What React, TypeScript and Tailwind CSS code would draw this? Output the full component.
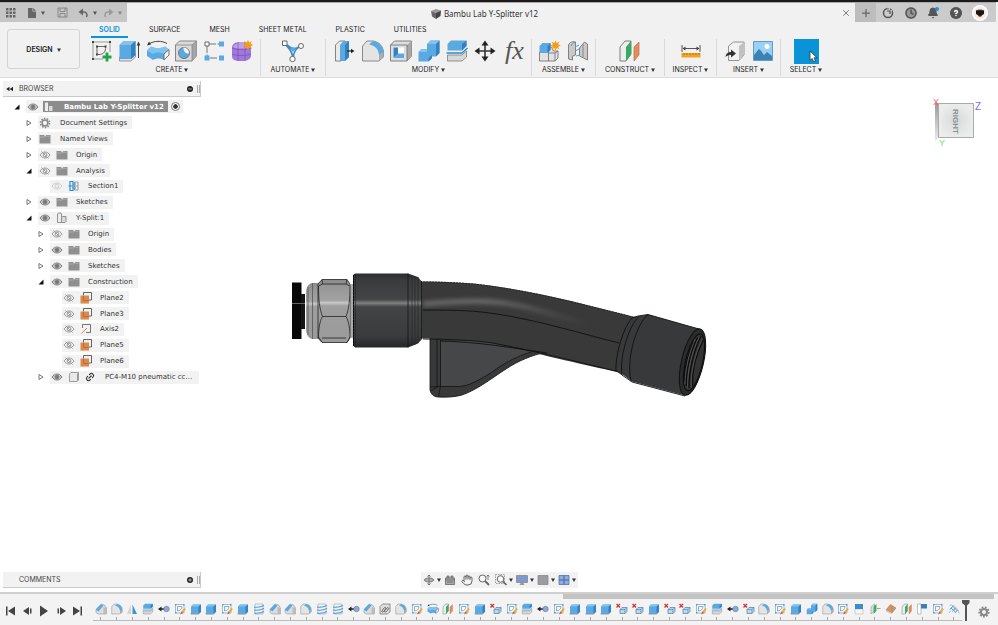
import React, { useState } from 'react';
import { Bell, Clock, Hand, HelpCircle, Link2, Plus, X } from 'lucide-react';

type IconProps = { className?: string };

const BLUE = '#5ba9e2';
const BLUE_LIGHT = '#82c2ee';
const BLUE_DARK = '#3581bd';

const Svg: React.FC<{ className?: string; children: React.ReactNode }> = ({ className = 'size-6', children }) => (
  <svg viewBox="0 0 24 24" className={`${className} shrink-0`} fill="none" aria-hidden="true">
    {children}
  </svg>
);

const SketchIcon: React.FC<IconProps> = ({ className }) => (
  <Svg className={className}>
    <path d="M3 3h17M3 3v17M20 3v10M3 20h10" stroke="#888" strokeWidth="0.8" />
    <path d="M7 7.500h8.500v2c0 4-3 6-6.500 6H7z" stroke="#555" strokeWidth="0.9" />
    <path d="M2 2h2v2H2zM19 2h2v2h-2zM2 19h2v2H2zM6 6.500h2v2H6zM14.500 6.500h2v2h-2zM6 14.500h2v2H6z" fill="#444" />
    <path d="M17 13.500v9M12.500 18h9" stroke="#23a348" strokeWidth="2.800" />
  </Svg>
);

const SketchEditIcon: React.FC<IconProps> = ({ className }) => (
  <Svg className={className}>
    <path d="M3 3h17v17H3z" fill="#f7fafc" stroke="#8d9da9" strokeWidth="1.400" />
    <path d="M7 7h9c0 5-4 9-9 9z" stroke="#5fa0d2" strokeWidth="1.600" />
    <path d="M2 2h3v3H2zM18 2h3v3h-3zM2 18h3v3H2z" fill="#5b9bcb" />
    <path d="M22 11l-7 9" stroke="#eda832" strokeWidth="4" />
    <path d="M15 17l-3 6 6-3z" fill="#cf4e40" />
  </Svg>
);

const ExtrudeIcon: React.FC<IconProps> = ({ className }) => (
  <Svg className={className}>
    <path d="M1.500 18v4h11.500l4.500-4v-3z" fill="#ddd" stroke="#888" strokeWidth="0.8" />
    <path d="M1.500 6l4-4h12v14l-4.500 4H1.500z" fill={BLUE} />
    <path d="M1.500 6l4-4h12l-4.500 4z" fill={BLUE_LIGHT} />
    <path d="M13 6l4.500-4v14L13 20z" fill={BLUE_DARK} />
    <path d="M20.500 19V5" stroke="#444" />
    <path d="M18.700 6.500l1.800-4 1.800 4z" fill="#333" />
  </Svg>
);

const BoxIcon: React.FC<IconProps> = ({ className }) => (
  <Svg className={className}>
    <path d="M2 7l4-4h16v14l-5 5H2z" fill={BLUE} />
    <path d="M2 7l4-4h16l-5 4z" fill={BLUE_LIGHT} />
    <path d="M17 7l5-4v14l-5 5z" fill={BLUE_DARK} />
    <path d="M2 20v2.500h15l5-5" stroke="#999" strokeWidth="1.500" />
  </Svg>
);

const RevolveIcon: React.FC<IconProps> = ({ className }) => (
  <Svg className={className}>
    <path d="M3 5C8 1.500 16 1.500 21 4.500" stroke="#444" />
    <path d="M1 6.500l2-4 2 3z" fill="#333" />
    <path d="M1 11.500L5 7.500c4 2 10 2 14 0l4 3v5.500l-5 5c-3-2-8-2-11 0l-6-4z" fill={BLUE} />
    <path d="M1 11.500L5 7.500c4 2 10 2 14 0l4 3-5 4.500c-3-2-8-2-11 0z" fill={BLUE_LIGHT} />
    <path d="M18 15l5-4.500v5.500l-5 5z" fill="#f3f3f3" stroke="#666" strokeWidth="0.9" />
  </Svg>
);

const HoleIcon: React.FC<IconProps> = ({ className }) => (
  <Svg className={className}>
    <path d="M1.500 6l4-4h17v15L18 22H1.500z" fill="#dadada" stroke="#7b7b7b" strokeWidth="0.9" />
    <path d="M18 6l4.500-4v15L18 22z" fill="#a5a5a5" />
    <path d="M1.500 6H18v16M18 6l4.500-4" stroke="#858585" strokeWidth="0.8" />
    <circle cx="10" cy="14" r="5.500" fill={BLUE} stroke="#667" strokeWidth="0.8" />
    <path d="M9.500 8.500a5.500 5.500 0 0 1 5.500 6c-3 .5-6-2-5.500-6z" fill="#f5f5f5" />
  </Svg>
);

const PatternIcon: React.FC<IconProps> = ({ className }) => (
  <Svg className={className}>
    <path d="M7 5h11M5 7v11M8 19h8" stroke="#777" strokeDasharray="7 1.500" />
    <path d="M3 3h4v4H3z" fill="#fff" stroke="#666" />
    <path d="M17 2.500h5v5h-5zM2.500 16.500h5v5h-5zM17 16.500h5v5h-5z" fill={BLUE} />
  </Svg>
);

const Star: React.FC<{ x: number; y: number }> = ({ x, y }) => (
  <g transform={`translate(${x} ${y})`}>
    <path d="M0-5l1.200 2.600L4-4 2.600-1.200 5.200 0 2.600 1.200 4 4 1.200 2.600 0 5.200-1.200 2.600-4 4-2.600 1.200-5.200 0-2.600-1.200-4-4-1.200-2.400z" fill="#f29d1d" />
  </g>
);

const FormIcon: React.FC<IconProps> = ({ className }) => (
  <Svg className={className}>
    <path d="M2 9c0-4 3-6 8-6 6 0 11 2 11 6v7c0 4-3 6-10 6-6 0-9-1-9-5z" fill="#a078da" />
    <path d="M3 8c2-3 6-5 9-5 4 0 7 2 8 5-4 2-13 2-17 0z" fill="#bf9fea" />
    <path d="M2 9c4 2 15 2 19 0M2 15c4 2 15 2 19 0M8 3.500V22M15 3.500V22" stroke="#7650b0" strokeWidth="0.7" />
    <Star x={18} y={6} />
  </Svg>
);

const AutomateIcon: React.FC<IconProps> = ({ className }) => (
  <Svg className={className}>
    <path d="M4 4.500c4 6 7 6 8 15M20 7c-5 2-7 5-8 12M6 6c5 5 8 4 12 2" stroke="#3f8cc8" strokeWidth="1.800" />
    <path d="M9 10l3 3 3-3-3-2z" fill={BLUE} />
    <path d="M1.500 2h4.500v4.500H1.500z" fill="#fff" stroke="#666" />
    <circle cx="20" cy="7" r="2.500" fill="#fff" stroke="#666" />
    <circle cx="11.500" cy="20" r="2.700" fill="#fff" stroke="#666" />
  </Svg>
);

const PressPullIcon: React.FC<IconProps> = ({ className }) => (
  <Svg className={className}>
    <path d="M2.500 6l4-4H12v16l-4 4H2.500z" fill="#e9e9e9" stroke="#777" strokeWidth="0.9" />
    <path d="M7 6l3.500-4H16v16l-4 4H7z" fill={BLUE} />
    <path d="M12 6l4-4v16l-4 4z" fill={BLUE_DARK} />
    <path d="M14 12h5" stroke="#222" strokeWidth="1.200" />
    <path d="M18 9.800l3.500 2.200-3.500 2.200z" fill="#222" />
  </Svg>
);

const FilletIcon: React.FC<IconProps> = ({ className }) => (
  <Svg className={className}>
    <path d="M1.500 7l4.500-5h6c6 1 10 5 10.500 11v5L18 22H1.500z" fill="#e4e4e4" stroke="#808080" strokeWidth="0.9" />
    <path d="M18 16l4.500-3v5L18 22z" fill="#adadad" />
    <path d="M8 5.500L12 2c6 1 10 5 10.500 11L18 16C17.500 10 14 6.500 8 5.500z" fill={BLUE} />
  </Svg>
);

const ChamferIcon: React.FC<IconProps> = ({ className }) => (
  <Svg className={className}>
    <path d="M2 14L13 2l6 2 4 6v12H6l-4-3z" fill="#ddd" stroke="#959595" strokeWidth="1.200" />
    <path d="M17 8l6 2v12h-6z" fill="#bcbcbc" />
    <path d="M1 13L12 2l5 3L7 17z" fill={BLUE} />
  </Svg>
);

const ShellIcon: React.FC<IconProps> = ({ className }) => (
  <Svg className={className}>
    <path d="M1.500 6l4-4h17v15L18 22H1.500z" fill="#dedede" stroke="#777" strokeWidth="0.9" />
    <path d="M18 6l4.500-4v15L18 22z" fill="#a8a8a8" />
    <path d="M1.500 6H18v16" stroke="#777" strokeWidth="0.9" />
    <path d="M4.500 8.500H15V19H4.500z" fill="#fff" />
    <path d="M4.500 8.500h4.500V15l-4.500 4z" fill={BLUE_DARK} />
    <path d="M4.500 19L9 14.500h6V19z" fill={BLUE} />
  </Svg>
);

const CombineIcon: React.FC<IconProps> = ({ className }) => (
  <Svg className={className}>
    <path d="M1.500 13l3-3H10V5l3.500-3.500h9V14l-3.500 3.500h-4V19l-3.500 3.500h-10z" fill={BLUE} />
    <path d="M10 5l3.500-3.500h9L19 5zM1.500 13l3-3H10v3z" fill={BLUE_LIGHT} />
    <path d="M19 5l3.500-3.500V14L19 17.500zM11.500 19l3.500-3v3l-3.500 3.500z" fill={BLUE_DARK} />
  </Svg>
);

const SplitIcon: React.FC<IconProps> = ({ className }) => (
  <Svg className={className}>
    <path d="M2.500 16v6H17l4.500-4v-6L17 16z" fill="#d8d8d8" stroke="#888" strokeWidth="0.9" />
    <path d="M2.500 5L6 1.500h15.500V7L17 11.500H2.500z" fill={BLUE} />
    <path d="M17 5l4.500-3.500V7L17 11.500z" fill={BLUE_DARK} />
    <path d="M1.500 14h15.500l5.500-5" stroke="#3189c9" strokeWidth="1.300" />
  </Svg>
);

const MoveIcon: React.FC<IconProps> = ({ className }) => (
  <Svg className={className}>
    <path d="M12 4v16M4 12h16" stroke="#333" strokeWidth="1.600" />
    <path d="M12 1.500l3.500 5h-7zM12 22.500l-3.500-5h7zM1.500 12l5-3.500v7zM22.500 12l-5 3.500v-7z" fill="#222" />
  </Svg>
);

const FxIcon: React.FC<IconProps> = () => (
  <span className="flex size-6 items-center justify-center pl-1 font-['Liberation_Serif',serif] text-[26px] leading-6 text-[#555] italic">fx</span>
);

const ComponentIcon: React.FC<IconProps> = ({ className }) => (
  <Svg className={className}>
    <path d="M1.500 13h9V9l3-1 2 4H20v7l-3 3H1.500z" fill="#e2e2e2" stroke="#777" strokeWidth="0.9" />
    <path d="M10.500 13v9M10.500 14h6.500l3-2M17 14v8" stroke="#777" strokeWidth="0.9" />
    <path d="M1.500 7l3-3h8v7l-3 3h-8z" fill={BLUE} />
    <path d="M9.500 7l3-3v7l-3 3z" fill={BLUE_DARK} />
    <Star x={17.500} y={6.500} />
  </Svg>
);

const JointIcon: React.FC<IconProps> = ({ className }) => (
  <Svg className={className}>
    <path d="M2.500 7c0-3 3-5 7-4v13l-3 1v4l-4-1zM21.500 21l-8-4V9l5-6 3 2z" fill="#c9c9c9" stroke="#777" strokeWidth="0.9" />
    <path d="M5 7c1-2 2-3 4-4M17 5v13" stroke="#888" />
    <path d="M9 8l4-2M9 12l4-2M10 17l4-1" stroke="#4da0d8" />
  </Svg>
);

const PlanesIcon: React.FC<IconProps> = ({ className }) => (
  <Svg className={className}>
    <path d="M2 8l5-6h6v13l-5 7H2z" fill="#eee" stroke="#707070" strokeWidth="0.9" />
    <path d="M8 8l5-6v14l-5 6z" fill="#35ac65" />
    <path d="M16 8l5-5v13l-5 6z" fill="#e28b5c" stroke="#c2714a" strokeWidth="0.7" />
  </Svg>
);

const MeasureIcon: React.FC<IconProps> = ({ className }) => (
  <Svg className={className}>
    <path d="M3 6v7M21 6v7M5 9.500h14" stroke="#555" />
    <path d="M3.500 9.500l3-2v4zM20.500 9.500l-3-2v4z" fill="#444" />
    <path d="M2.500 14h19v4.500h-19z" fill="#f1a51e" />
    <path d="M5 14v2M8 14v2M11 14v2M14 14v2M17 14v2M20 14v2" stroke="#a66b00" strokeWidth="0.8" />
  </Svg>
);

const InsertIcon: React.FC<IconProps> = ({ className }) => (
  <Svg className={className}>
    <path d="M5.500 7l5-4H21v13l-5 5.500H5.500z" fill="#f2f2f2" stroke="#888" strokeWidth="0.9" />
    <path d="M16 7l5-4v13l-5 5.500z" fill="#c2c2c2" />
    <path d="M2.500 18c.5-4 3-5 5.500-5v-2.500l5 4-5 4V16c-2 0-4 .5-5.500 2z" fill="#333" />
  </Svg>
);

const ImageIcon: React.FC<IconProps> = ({ className }) => (
  <Svg className={className}>
    <path d="M2.500 2.500h19v19h-19z" fill="#9bd0f2" stroke="#5e9ec9" />
    <circle cx="16" cy="7.500" r="2.500" fill="#fff" />
    <path d="M3 16l5-6c2 1 4 5 5 6l3-3 5 4v4H3z" fill="#3b82b4" />
  </Svg>
);

const SelectIcon: React.FC<IconProps> = () => (
  <svg viewBox="0 0 25 25" className="size-[25px] shrink-0" aria-hidden="true">
    <path d="M0 0h25v25H0z" fill="#0a94d8" />
    <path d="M16 12v9.500l2.200-2 1.500 3.300 1.800-.8-1.500-3.200h3z" fill="#fff" stroke="#333" strokeWidth="0.8" />
  </svg>
);

const MirrorIcon: React.FC<IconProps> = ({ className }) => (
  <Svg className={className}>
    <path d="M10 3v19H2z" fill="#cfd4d8" />
    <path d="M13 3v19h9z" fill="#4393cf" />
  </Svg>
);

const TranslateIcon: React.FC<IconProps> = ({ className }) => (
  <Svg className={className}>
    <path d="M6 12h9" stroke="#222" strokeWidth="3" />
    <path d="M0 12l7-5v10z" fill="#222" />
    <circle cx="17" cy="12" r="5.500" fill="#8fa9d6" stroke="#5d79ad" strokeWidth="1.200" />
  </Svg>
);

const ThreadIcon: React.FC<IconProps> = ({ className }) => (
  <Svg className={className}>
    <path d="M4 2h16v20H4z" fill="#f1f4f6" stroke="#9aa3aa" strokeWidth="1.200" />
    <path d="M2 8c6 1 14 0 20-3M2 14c6 1 14 0 20-3M2 20c6 1 14 0 20-3" stroke="#4b9bd5" strokeWidth="2.200" />
  </Svg>
);

const RemoveIcon: React.FC<IconProps> = ({ className }) => (
  <Svg className={className}>
    <path d="M1 2l7 7M8 2L1 9" stroke="#cf3434" strokeWidth="2.600" />
    <path d="M8 13l4-4h10v8l-4 4H8z" fill="#b9d8ee" stroke="#5788aa" strokeWidth="1.500" />
    <path d="M8 13h10v8M18 13l4-4" stroke="#5788aa" strokeWidth="1.400" />
  </Svg>
);

const CoilIcon: React.FC<IconProps> = ({ className }) => (
  <Svg className={className}>
    <path d="M2 7l5-5h15v16l-5 4H2z" fill="#ddd" stroke="#777" strokeWidth="1.500" />
    <path d="M6 16l4-6c3-3 5 0 3 2l-3 4c-2 3-6 2-4 0zM11 16l5-6c3-2 4 1 3 2l-4 5c-2 2-5 1-4-1z" stroke="#555" strokeWidth="1.600" />
  </Svg>
);

const HalfIcon: React.FC<IconProps> = ({ className }) => (
  <Svg className={className}>
    <path d="M4 12h16v10H4z" fill="#f6f6f6" stroke="#aaa" />
    <path d="M4 2h16v10H4z" fill="#3d8dca" />
  </Svg>
);

const GreenPlaneIcon: React.FC<IconProps> = ({ className }) => (
  <Svg className={className}>
    <path d="M4 8l7-6v14l-7 6z" fill="#ddd" stroke="#888" />
    <path d="M9 7l6-5v14l-6 6z" fill="#43ae6a" />
    <path d="M16 11h7" stroke="#888" strokeWidth="1.500" />
  </Svg>
);

const OrangePlaneIcon: React.FC<IconProps> = ({ className }) => (
  <Svg className={className}>
    <path d="M2 14l9-11 11 7-8 10z" fill="#dd925e" stroke="#a8663c" />
    <path d="M2 14l12 6v3L2 17z" fill="#ccc" />
    <path d="M14 8v8" stroke="#5a9" strokeWidth="2" />
  </Svg>
);

const FlagIcon: React.FC<IconProps> = ({ className }) => (
  <Svg className={className}>
    <path d="M3 2h7v20H3z" fill="#fff" stroke="#999" strokeWidth="1.200" />
    <path d="M10 2h12v9H10z" fill="#367fb9" />
  </Svg>
);

const WrapIcon: React.FC<IconProps> = ({ className }) => (
  <Svg className={className}>
    <path d="M3 4c10 0 17 6 19 17M2 20l4-5" stroke="#9aa" strokeWidth="1.500" />
    <path d="M4 13l6-7M9 17l6-7M14 20l5-6M6 10l9 8M10 7l8 8" stroke="#459bd7" strokeWidth="2" />
  </Svg>
);

const FEATURE_ICONS: Record<string, React.FC<IconProps>> = {
  chamfer: ChamferIcon,
  fillet: FilletIcon,
  mirror: MirrorIcon,
  split: SplitIcon,
  move: TranslateIcon,
  sketch: SketchEditIcon,
  extrude: BoxIcon,
  thread: ThreadIcon,
  coil: CoilIcon,
  revolve: RevolveIcon,
  planes: PlanesIcon,
  remove: RemoveIcon,
  combine: CombineIcon,
  half: HalfIcon,
  green: GreenPlaneIcon,
  orange: OrangePlaneIcon,
  flag: FlagIcon,
  wrap: WrapIcon,
};

// timeline features, oldest first
const TIMELINE = (
  'chamfer fillet mirror split move sketch extrude extrude sketch extrude thread chamfer chamfer fillet thread thread ' +
  'move chamfer coil fillet sketch revolve planes sketch extrude remove sketch split move sketch extrude extrude extrude ' +
  'remove remove extrude remove remove sketch split move remove fillet sketch extrude combine fillet sketch half green ' +
  'orange planes flag sketch wrap'
).split(' ');

const TABS = ['SOLID', 'SURFACE', 'MESH', 'SHEET METAL', 'PLASTIC', 'UTILITIES'];

const GROUPS: { label: string; width: string; icons: React.FC<IconProps>[] }[] = [
  { label: 'CREATE', width: 'w-[177px]', icons: [SketchIcon, ExtrudeIcon, RevolveIcon, HoleIcon, PatternIcon, FormIcon] },
  { label: 'AUTOMATE', width: 'w-[65px]', icons: [AutomateIcon] },
  { label: 'MODIFY', width: 'w-[206px]', icons: [PressPullIcon, FilletIcon, ShellIcon, CombineIcon, SplitIcon, MoveIcon, FxIcon] },
  { label: 'ASSEMBLE', width: 'w-16', icons: [ComponentIcon, JointIcon] },
  { label: 'CONSTRUCT', width: 'w-[69px]', icons: [PlanesIcon] },
  { label: 'INSPECT', width: 'w-[52px]', icons: [MeasureIcon] },
  { label: 'INSERT', width: 'w-16', icons: [InsertIcon, ImageIcon] },
  { label: 'SELECT', width: 'w-[50px]', icons: [SelectIcon] },
];

const Caret: React.FC<{ className?: string }> = ({ className = 'text-[#333]' }) => (
  <svg viewBox="0 0 4 4" className={`size-1 shrink-0 ${className}`} aria-hidden="true">
    <path d="M0 .5h4L2 4z" fill="currentColor" />
  </svg>
);

const TitleBar: React.FC = () => (
  <header className="flex h-[22px] border-t-2 border-[#1c1a1b] bg-[#f1f1f1] text-[#666]">
    <div className="flex w-[127px] items-center border-t border-[#aaa] bg-[#c6c6c6] pl-1">
      <button aria-label="Data panel" className="flex w-[22px] pl-px">
        <svg viewBox="0 0 11 11" className="size-[11px]" fill="#666"><path d="M1 1h2.500v2.500H1zM4.500 1H7v2.500H4.500zM8 1h2.500v2.500H8zM1 4.500h2.500V7H1zM4.500 4.500H7V7H4.500zM8 4.500h2.500V7H8zM1 8h2.500v2.500H1zM4.500 8H7v2.500H4.500zM8 8h2.500v2.500H8z" /></svg>
      </button>
      <button aria-label="File" className="flex w-[31px] items-center gap-1">
        <svg viewBox="0 0 11 12" className="h-3 w-[11px]"><path d="M2 1h4.500v3.500H10V11H2zM7.200 1L10 3.800H7.200z" fill="#666" /></svg>
        <Caret className="text-[#555]" />
      </button>
      <button aria-label="Save" className="flex w-[21px]">
        <svg viewBox="0 0 11 11" className="size-[11px]" fill="none" stroke="#888"><path d="M1 1h9v9H1zM3 1v3.500h5V1M3 10V6.500h5V10" /></svg>
      </button>
      <button aria-label="Undo" className="flex w-[25px] items-center gap-1">
        <svg viewBox="0 0 11 10" className="h-2.5 w-[11px]" fill="none"><path d="M2 4h4c3 0 3.500 3 2.500 5" stroke="#666" strokeWidth="1.500" /><path d="M5 .5V7.500L.5 4z" fill="#666" /></svg>
        <Caret className="text-[#555]" />
      </button>
      <button aria-label="Redo" className="flex items-center gap-1">
        <svg viewBox="0 0 11 10" className="h-2.5 w-[11px]" fill="none"><path d="M9 4H5C2 4 1.500 7 2.500 9" stroke="#999" strokeWidth="1.500" /><path d="M6 .5V7.500L10.500 4z" fill="#999" /></svg>
        <Caret className="text-[#888]" />
      </button>
    </div>
    <div className="flex flex-1 items-center border-t border-[#aaa] pr-1">
      <h1 className="flex flex-1 items-center justify-center gap-0.5 pt-0.5 font-['Noto_Sans',sans-serif] text-[8px] leading-3 text-[#333]">
        <svg viewBox="0 0 12 12" className="size-3" aria-hidden="true">
          <path d="M1 3l5-2 5 1.500L6 5z" fill="#999" />
          <path d="M1 3l5 2v6L2 8.500z" fill="#666" />
          <path d="M6 5l5-2.500-.5 5.500L6 11z" fill="#444" />
        </svg>
        Bambu Lab Y-Splitter v12
      </h1>
      <button aria-label="Close tab"><X className="size-2.5" strokeWidth={2} /></button>
    </div>
    <div className="mr-0.5 flex w-[141px] items-center border-t border-[#aaa] bg-[#cbcbcb]">
      <button aria-label="New tab" className="flex h-full w-[21px] items-center justify-center bg-[#bdbdbd]"><Plus className="size-3" strokeWidth={2.5} /></button>
      <div className="flex flex-1 items-center justify-between pr-2 pl-1.5">
        <button aria-label="Extensions">
          <svg viewBox="0 0 12 12" className="size-3" fill="none"><circle cx="6" cy="6" r="4.500" stroke="#555" strokeWidth="1.500" /><path d="M5 1h2.500v4H9l1-2.500" stroke="#cbcbcb" /><path d="M5 4h3v3" stroke="#555" strokeWidth="1.200" /></svg>
        </button>
        <button aria-label="Job status"><Clock className="size-3 rounded-full bg-[#999] text-[#555]" strokeWidth={3} /></button>
        <button aria-label="Notifications" className="relative">
          <Bell className="size-3 text-[#555]" fill="#555" />
          <span className="absolute top-0 right-0 size-1 rounded-full bg-[#1b93d6]" />
        </button>
        <button aria-label="Help"><HelpCircle className="size-3 rounded-full bg-[#555] text-[#555] [&>path]:stroke-white" strokeWidth={3} /></button>
        <button aria-label="Account" className="flex size-4 items-center justify-center rounded-full bg-white">
          <svg viewBox="0 0 16 16" className="size-4"><circle cx="8" cy="8" r="6.500" fill="#f4ede7" /><path d="M4 6c1-2 7-2 8 0l-1 3c-1 2-2 3-3 3s-2-1-3-3z" fill="#6a4b3b" /><path d="M4 5.500h8V9l-4 2-4-2z" fill="#1e1715" /></svg>
        </button>
      </div>
    </div>
  </header>
);

const Toolbar: React.FC = () => {
  const [activeTab, setActiveTab] = useState('SOLID');

  return (
    <div className="flex h-14 border-b border-[#dcdcdc] bg-[#f1f1f1] font-[Inter,sans-serif] text-[7px] leading-[10px] text-[#222]">
      <button className="mt-[7px] ml-[7px] flex h-10 w-[73px] items-center justify-center gap-1 rounded-[3px] border border-[#d4d4d4] pt-px font-semibold">
        DESIGN <Caret />
      </button>
      <div className="ml-1 flex flex-col">
        <nav className="flex gap-[13px] pl-[7px]">
          {TABS.map(tab => (
            <button
              key={tab}
              onClick={() => setActiveTab(tab)}
              className={`h-4 border-b-2 px-2 pt-0.5 whitespace-nowrap ${tab === activeTab ? 'border-[#0a94d8] font-semibold text-[#0a94d8]' : 'border-transparent'}`}
            >
              {tab}
            </button>
          ))}
        </nav>
        <div className="flex">
          {GROUPS.map(({ label, width, icons }, i) => (
            <div key={label} className={`${width} mt-px flex h-[37px] flex-col items-center ${i < GROUPS.length - 1 ? 'border-r border-[#d9d9d9]' : ''}`}>
              <div className="flex h-6 items-center gap-1">
                {icons.map((Icon, n) => (
                  <button key={n} aria-label={`${label} ${n + 1}`}><Icon /></button>
                ))}
              </div>
              <button className="mt-0.5 flex items-center gap-0.5">{label} <Caret /></button>
            </div>
          ))}
        </div>
      </div>
    </div>
  );
};

type TreeRow = {
  label: string;
  depth: number;
  arrow?: 'open' | 'closed';
  eye?: 'on' | 'off' | 'faint';
  icon: 'root' | 'gear' | 'folder' | 'section' | 'part' | 'plane' | 'axis' | 'body';
};

const TREE: TreeRow[] = [
  { label: 'Bambu Lab Y-Splitter v12', depth: 0, arrow: 'open', eye: 'on', icon: 'root' },
  { label: 'Document Settings', depth: 1, arrow: 'closed', icon: 'gear' },
  { label: 'Named Views', depth: 1, arrow: 'closed', icon: 'folder' },
  { label: 'Origin', depth: 1, arrow: 'closed', eye: 'off', icon: 'folder' },
  { label: 'Analysis', depth: 1, arrow: 'open', eye: 'off', icon: 'folder' },
  { label: 'Section1', depth: 2, eye: 'faint', icon: 'section' },
  { label: 'Sketches', depth: 1, arrow: 'closed', eye: 'on', icon: 'folder' },
  { label: 'Y-Split:1', depth: 1, arrow: 'open', eye: 'on', icon: 'part' },
  { label: 'Origin', depth: 2, arrow: 'closed', eye: 'off', icon: 'folder' },
  { label: 'Bodies', depth: 2, arrow: 'closed', eye: 'on', icon: 'folder' },
  { label: 'Sketches', depth: 2, arrow: 'closed', eye: 'on', icon: 'folder' },
  { label: 'Construction', depth: 2, arrow: 'open', eye: 'on', icon: 'folder' },
  { label: 'Plane2', depth: 3, eye: 'off', icon: 'plane' },
  { label: 'Plane3', depth: 3, eye: 'off', icon: 'plane' },
  { label: 'Axis2', depth: 3, eye: 'off', icon: 'axis' },
  { label: 'Plane5', depth: 3, eye: 'off', icon: 'plane' },
  { label: 'Plane6', depth: 3, eye: 'off', icon: 'plane' },
  { label: 'PC4-M10 pneumatic cc...', depth: 2, arrow: 'closed', eye: 'on', icon: 'body' },
];

const INDENT = ['pl-[9px]', 'pl-[21px]', 'pl-[33px]', 'pl-[45px]'];

const EyeIcon: React.FC<{ state: 'on' | 'off' | 'faint' }> = ({ state }) => {
  const color = state === 'faint' ? '#cfcfcf' : state === 'off' ? '#999' : '#808080';
  return (
    <svg viewBox="0 0 12 10" className="h-2.5 w-3 shrink-0" fill="none" aria-hidden="true">
      <path d="M1 5c2.500-4 7.500-4 10 0-2.500 4-7.500 4-10 0z" stroke={color} fill={state === 'on' ? '#c4c4c4' : 'none'} />
      <circle cx="6" cy="5" r="1.900" stroke={color} fill={state === 'on' ? '#777' : 'none'} />
      {state === 'off' && <path d="M2.500 1.500l7 7" stroke={color} strokeWidth="0.9" />}
    </svg>
  );
};

const TreeIcon: React.FC<{ kind: TreeRow['icon'] }> = ({ kind }) => (
  <svg viewBox="0 0 12 12" className="size-3 shrink-0" fill="none" aria-hidden="true">
    {kind === 'folder' && <path d="M.5 2h4.500l1 1.200L7.500 2h4v8.500H.5z" fill="#8f8f8f" />}
    {kind === 'folder' && <path d="M.5 4h5L7 3.200h4.500" stroke="#c4c4c4" strokeWidth="0.6" />}
    {kind === 'gear' && (
      <>
        <circle cx="6" cy="6" r="4.500" stroke="#888" strokeWidth="1.600" strokeDasharray="1.500 1.300" />
        <circle cx="6" cy="6" r="2.900" stroke="#888" strokeWidth="1.500" />
      </>
    )}
    {(kind === 'part' || kind === 'root') && (
      <>
        <path d="M1.500 2l1-1H5l.5 1v8.500h-4z" fill="#ececec" stroke="#888" strokeWidth="0.9" />
        <path d="M5.500 5.500l1-1h3.500v5l-1 1H5.500z" fill="#d8d8d8" stroke="#888" strokeWidth="0.9" />
      </>
    )}
    {kind === 'section' && (
      <>
        <path d="M2 1.500h3v9H2zM5 4h3M5 8h3" stroke="#2c8fd2" strokeWidth="1.200" />
        <path d="M6.500 2h3.500v8H6.500zM6.500 6H10" stroke="#7a8a96" strokeWidth="0.8" />
        <path d="M.5 6h5" stroke="#2c8fd2" />
      </>
    )}
    {kind === 'plane' && (
      <>
        <path d="M3.500 3V.5h8V8H9" stroke="#555" strokeWidth="0.9" />
        <path d="M.5 3.500H9v8H.5z" fill="#dc8950" />
        <path d="M3.500 3.500v5H9" stroke="#b5672f" strokeWidth="0.8" />
      </>
    )}
    {kind === 'axis' && (
      <>
        <path d="M2.500 5V1.500h8v8H6" stroke="#666" strokeWidth="0.9" />
        <path d="M1.500 10.500L7 5" stroke="#df8246" />
      </>
    )}
    {kind === 'body' && (
      <>
        <path d="M1.500 3l1.500-1.500h7.500v7.500L9 10.500H1.500z" fill="#e8e8e8" stroke="#888" strokeWidth="0.8" />
        <path d="M9 3l1.500-1.500v7.500L9 10.500z" fill="#999" />
      </>
    )}
  </svg>
);

const PanelHeader: React.FC<{ title: string; collapse?: boolean }> = ({ title, collapse }) => (
  <div className="flex h-4 w-[198px] shrink-0 items-center border-r border-b border-[#c9c9c9] bg-[#f2f2f2] font-[Inter,sans-serif] text-[7px] leading-3 text-[#444]">
    <span className="flex w-4 pl-[3px]">
      {collapse && <svg viewBox="0 0 7 6" className="h-1.5 w-[7px]"><path d="M3.500.8v4.400L.2 3zM7 .8v4.400L3.700 3z" fill="#222" /></svg>}
    </span>
    <h2 className="flex-1 pt-px">{title}</h2>
    <button aria-label={`${title} options`} className="mr-1">
      <svg viewBox="0 0 6 6" className="size-1.5"><circle cx="3" cy="3" r="3" fill="#222" /><path d={collapse ? 'M1.200 3h3.600' : 'M1.200 3h3.600M3 1.200v3.600'} stroke="#ccc" strokeWidth="0.8" /></svg>
    </button>
    <span className="h-2 w-[3px] border-x border-[#aaa]" />
  </div>
);

const BrowserTree: React.FC = () => (
  <ul className="mt-0.5 flex h-[286px] w-[200px] flex-col font-['DejaVu_Sans',sans-serif] text-[7px] leading-3 text-[#333]">
    {TREE.map((row, i) => (
      <li key={i} className={`flex flex-1 items-center ${INDENT[row.depth]}`}>
        <span className="flex w-3.5 shrink-0 pl-0.5">
          {row.arrow && (
            <svg viewBox="0 0 6 6" className="size-1.5" aria-hidden="true">
              {row.arrow === 'open' ? <path d="M5.500.5v5H.5z" fill="#111" /> : <path d="M1 .5L5 3 1 5.500z" fill="#fff" stroke="#555" strokeWidth="0.8" />}
            </svg>
          )}
        </span>
        <div className={`flex h-[13px] items-center bg-[#f2f2f2] ${row.icon === 'root' ? '' : row.icon === 'body' ? 'pr-[7px]' : 'pr-[5px]'} ${row.eye ? '' : 'pl-px'}`}>
          {row.eye && <span className={`flex w-3 pl-px ${row.icon === 'root' ? 'mr-[5px]' : 'mr-1.5'}`}><EyeIcon state={row.eye} /></span>}
          {row.icon === 'root' ? (
            <>
              <span className="flex h-[11px] items-center bg-[#8c8c8c] pr-1 font-bold whitespace-nowrap text-white">
                <TreeIcon kind={row.icon} />
                <span className="pl-[9px]">{row.label}</span>
              </span>
              <input type="radio" defaultChecked aria-label="Activate component" className="mx-[3px] size-[9px] appearance-none rounded-full border border-[#777] bg-white bg-radial from-[#333] from-40% to-white to-50%" />
            </>
          ) : (
            <>
              <TreeIcon kind={row.icon} />
              {row.icon === 'body' && <Link2 className="ml-[5px] size-2.5 -rotate-45 text-[#222]" strokeWidth={2.5} />}
              <span className={`whitespace-nowrap ${row.icon === 'body' ? 'pl-2.5' : row.eye ? 'pl-2' : 'pl-[9px]'}`}>{row.label}</span>
            </>
          )}
        </div>
      </li>
    ))}
  </ul>
);

const Model: React.FC = () => (
  <svg viewBox="285 265 430 140" className="absolute top-[187px] left-[285px] h-[140px] w-[430px]" role="img" aria-label="Y-splitter model, right view">
    <defs>
      <linearGradient id="body" x1="0" y1="0" x2="0" y2="1">
        <stop offset="0" stopColor="#2c2d2e" />
        <stop offset="0.1" stopColor="#3b3c3d" />
        <stop offset="0.35" stopColor="#434445" />
        <stop offset="0.4" stopColor="#808080" />
        <stop offset="0.45" stopColor="#434445" />
        <stop offset="0.85" stopColor="#3a3b3c" />
        <stop offset="1" stopColor="#252627" />
      </linearGradient>
      <linearGradient id="metal" x1="0" y1="0" x2="0" y2="1">
        <stop offset="0" stopColor="#8b8b8b" />
        <stop offset="0.15" stopColor="#999" />
        <stop offset="0.33" stopColor="#a2a2a2" />
        <stop offset="0.37" stopColor="#c8c8c8" />
        <stop offset="0.42" stopColor="#9e9e9e" />
        <stop offset="1" stopColor="#9b9b9b" />
      </linearGradient>
      <linearGradient id="shine" x1="422" y1="0" x2="590" y2="0" gradientUnits="userSpaceOnUse">
        <stop offset="0" stopColor="#8a8a8a" stopOpacity="0.6" />
        <stop offset="0.4" stopColor="#8c8c8c" stopOpacity="0.6" />
        <stop offset="1" stopColor="#777" stopOpacity="0" />
      </linearGradient>
      <filter id="soft" x="-10%" y="-100%" width="120%" height="300%"><feGaussianBlur stdDeviation="2" /></filter>
    </defs>

    {/* pneumatic fitting */}
    <path d="M292 282.500h9.500v56.500H292z" fill="#080808" />
    <path d="M301 294h4v35h-4z" fill="#151515" />
    <path d="M292 303.500h13" stroke="#666" />
    <path d="M318 283h-6c-4 1-6 5-6 10v36c0 5 2 9 6 10h6z" fill="url(#metal)" />
    <path d="M308 287v48M312.500 283v56" stroke="#555" strokeWidth="0.8" />
    <path d="M322 279.500h25l3.500 5.500v52l-3.500 5.500h-25l-4-4.500v-54z" fill="url(#metal)" stroke="#222" strokeWidth="0.8" />
    <path d="M318.500 286l4-2h23.500l4 2M322 279.500l.5 4.500M346 284l1-4.500M318.500 286c0 13 1 23 4 30.500h23.500c3-7 4-18 4-30M322.500 316.500c-3 5-4 13-4 21M346 316.500c3 5 4 13 4 21M322 338h24M318.500 337l4 5.500M350 337l-3 5.500" stroke="#222" strokeWidth="0.8" fill="none" />
    <path d="M350.500 284h3v54h-3z" fill="#aaa" />

    {/* fin */}
    <path d="M430 336v54c1 4 3 6.500 8 7 9 .500 17 0 24-2 15-5 30-17 44-26 12-8 26-14 41-17l-40-20z" fill="#39393a" />
    <path d="M440 341v45.500h20c13-1 30-13 40-20 11-7 24-12 35-15l-30-11z" fill="#464748" />
    <path d="M430 336v54c1 4 3 6.500 8 7 9 .500 17 0 24-2 15-5 30-17 44-26 12-8 26-14 41-17M437 339v48M440.500 340v46.500M430 387l10-.5h20c13-1 30-13 40-20 11-7 22-12 33-15M430.500 391l7-4M440.500 386.500l-2 10" stroke="#111" strokeWidth="0.8" fill="none" />

    {/* curved tube */}
    <path d="M421 281.500c25 0 48 1 69 4 45 6 98 19 150 33l-16 55c-37-8-75-17-134-31-18-3-46-4-69-4z" fill="#39393a" />
    <path d="M423 304c34-3 70-5 98 2 30 7 55 15 80 22" stroke="url(#shine)" strokeWidth="5" fill="none" filter="url(#soft)" />
    <path d="M423 282c25 0 46 1 67 4 45 6 95 19 143 31" stroke="#222" strokeWidth="0.8" strokeDasharray="2 1" fill="none" />
    <path d="M423 310c22 0 45 0 67 3 45 6 92 21 133 31M423 339c24 0 46 1 67 3.500 43 8 90 20 128 29M440 341c38 1 68 6 107 12" stroke="#111" strokeWidth="0.9" fill="none" />

    {/* inlet sleeve */}
    <path d="M353 275l2-1.500h53l10 3.500 4 5v57l-4 4.500-10 4h-53l-2-2z" fill="url(#body)" />
    <path d="M353.500 275v71M408 273.500v74M421.500 281v58" stroke="#151515" strokeWidth="0.8" fill="none" />
    <path d="M355.500 274v73M412 275v71M415 276v69M418 277v66" stroke="#222" strokeOpacity="0.7" strokeWidth="0.8" fill="none" />
    <path d="M353.500 275v71" stroke="#000" strokeDasharray="2 1" />

    {/* outlet sleeve */}
    <path d="M630 317l7-.5 11-2 51 14.500c8 4 7 22 3 38-4 18-9 28-17 28.500l-53-14-8-6-7-4c-2-14 4-42 13-54.500z" fill="#38393a" />
    <path d="M633 317c-9 8-18 38-17 54M639 316.500c-10 8-20 42-17 58M648 314.500c-12 10-22 45-17 66.500M632 318l6-2 10-1.500 51 14.500M617 371l5 4 10 7 53 14" stroke="#111" strokeWidth="0.9" fill="none" />
    <g transform="rotate(13 692.500 362)">
      <ellipse cx="692.500" cy="362" rx="11" ry="34" fill="#2a2b2b" stroke="#101010" />
      <ellipse cx="694" cy="362" rx="8.500" ry="29" fill="#333" stroke="#0c0c0c" />
      <path d="M689 342c-3 13-3 28 0 41M692 337c-4 15-4 35 0 50M695 335c-4 16-4 38 0 53M698 338c-4 16-4 34 0 48" stroke="#0e0e0e" strokeWidth="1.400" fill="none" />
      <path d="M690 339c-3 14-3 32 0 46M693.500 336c-4 15-4 37 0 52M697 337c-4 16-4 36 0 50" stroke="#666" strokeWidth="0.6" fill="none" />
    </g>
  </svg>
);

const ViewCube: React.FC = () => (
  <button aria-label="View cube" className="absolute top-4 right-3 size-[54px]">
    <svg viewBox="0 0 54 54" className="size-[54px]" fontFamily="Liberation Sans, sans-serif">
      <defs>
        <linearGradient id="cubeEdge" x1="0" y1="0" x2="0" y2="1"><stop offset="0" stopColor="#999" /><stop offset="1" stopColor="#eee" /></linearGradient>
        <radialGradient id="cubeFace"><stop offset="0" stopColor="#d6d9da" /><stop offset="1" stopColor="#ebecec" /></radialGradient>
      </defs>
      <path d="M3 9h4v34l-4 5z" fill="url(#cubeEdge)" />
      <path d="M6.500 9.500h35v34h-35z" fill="url(#cubeFace)" stroke="#aaa" />
      <text transform="translate(21 15) rotate(90)" fontSize="8" fontWeight="bold" fill="#8a9397">RIGHT</text>
      <text x="1" y="11" fontSize="9" fill="#f26464">X</text>
      <text x="43" y="16" fontSize="10" fill="#7070ee">Z</text>
      <text x="7" y="52" fontSize="9" fill="#6fe46f">Y</text>
    </svg>
  </button>
);

const NavBar: React.FC = () => (
  <div className="flex h-4 items-center gap-[3px] bg-[#f2f2f2] px-0.5 text-[#555]">
    <button aria-label="Orbit" className="flex items-center gap-0.5">
      <svg viewBox="0 0 12 12" className="size-3" fill="none" stroke="#666" strokeWidth="0.9"><path d="M6 1v10M1 6h10" /><ellipse cx="6" cy="6" rx="4.500" ry="2" /><path d="M4.500 2.500L6 1l1.500 1.500M4.500 9.500L6 11l1.500-1.500" /></svg>
      <Caret />
    </button>
    <button aria-label="Look at" className="mr-0.5">
      <svg viewBox="0 0 12 12" className="size-3" fill="#aaa" stroke="#666" strokeWidth="0.8"><path d="M1.500 4h9v6.500h-9zM3 4V2h2v2M7 4V2h2v2M1.500 6h9M3 8h6" /></svg>
    </button>
    <button aria-label="Pan" className="mr-0.5"><Hand className="size-3" strokeWidth={1.8} /></button>
    <button aria-label="Zoom" className="mr-0.5">
      <svg viewBox="0 0 12 12" className="size-3" fill="none" stroke="#666"><circle cx="4.500" cy="4.500" r="3.500" fill="#fafafa" /><path d="M7 7l4 4" strokeWidth="1.800" /><path d="M10 1v5M8.500 2.500L10 1l1.500 1.500" strokeWidth="0.8" /></svg>
    </button>
    <button aria-label="Fit" className="flex items-center gap-0.5">
      <svg viewBox="0 0 12 12" className="size-3" fill="none" stroke="#666"><path d="M.5.5h9v9h-9z" strokeWidth="0.6" strokeDasharray="1.500 1" /><circle cx="5.500" cy="5" r="3.300" fill="#fafafa" /><path d="M8 7.500l3.500 3.500" strokeWidth="1.700" /></svg>
      <Caret />
    </button>
    <button aria-label="Display settings" className="flex items-center gap-0.5">
      <svg viewBox="0 0 12 12" className="size-3"><path d="M.5 1.500h11v7H.5z" fill="#7d99cd" stroke="#888" strokeWidth="0.8" /><path d="M4.500 9h3l1 2h-5z" fill="#999" /></svg>
      <Caret />
    </button>
    <button aria-label="Grid and snaps" className="flex items-center gap-0.5">
      <svg viewBox="0 0 12 12" className="size-3"><path d="M1 1.500h10v9H1z" fill="#9c9ca2" stroke="#888" strokeWidth="0.8" /></svg>
      <Caret />
    </button>
    <button aria-label="Viewports" className="flex items-center gap-0.5">
      <svg viewBox="0 0 12 12" className="size-3" fill="#8facde" stroke="#5874a8" strokeWidth="0.8"><path d="M1 1.500h5v4.500H1zM6 1.500h5v4.500H6zM1 6h5v4.500H1zM6 6h5v4.500H6z" /></svg>
      <Caret />
    </button>
  </div>
);

const PLAYBACK = [
  { label: 'Go to start', path: 'M1 1.500h1.500v9H1zM10 1.500v9L3 6z' },
  { label: 'Step back', path: 'M7 2v8L1 6zM8 3.500h1.500v5H8z' },
  { label: 'Play', path: 'M2 .5L10 6l-8 5.500z' },
  { label: 'Step forward', path: 'M5 2v8l6-4zM2.500 3.500H4v5H2.500z' },
  { label: 'Go to end', path: 'M9.500 1.500H11v9H9.500zM2 1.500v9L9 6z' },
];

const Timeline: React.FC = () => (
  <footer className="flex h-[33px] flex-col border-t-2 border-[#cfcfcf] bg-[#f3f3f3]">
    <div className="flex h-[5px] justify-end pr-1"><span className="h-full w-[431px] bg-[#c4c4c4]" /></div>
    <div className="flex flex-1">
      <div className="flex w-[90px] items-center justify-between pr-[7px] pb-0.5 pl-[5px]">
        {PLAYBACK.map(({ label, path }) => (
          <button key={label} aria-label={label}>
            <svg viewBox="0 0 12 12" className="size-3"><path d={path} fill="#444" /></svg>
          </button>
        ))}
      </div>
      <ol className="ml-[3px] flex h-[22px] flex-1 border-b border-[#bbb]">
        {TIMELINE.map((name, i) => {
          const Icon = FEATURE_ICONS[name];
          return (
            <li key={i} className="flex flex-1 flex-col items-center justify-end">
              <button aria-label={`${name} ${i + 1}`} className="mb-0.5"><Icon className="size-3" /></button>
              <span className="h-[3px] w-px bg-[#aaa]" />
            </li>
          );
        })}
      </ol>
      <svg viewBox="0 0 8 22" className="h-[22px] w-2" aria-hidden="true"><path d="M0 1h7.500v3L5 6.500V22H3V6.500L0 4z" fill="#555" /></svg>
      <button aria-label="Timeline settings" className="mr-2 ml-2 flex items-center">
        <svg viewBox="0 0 12 12" className="size-3" fill="none" stroke="#888"><circle cx="6" cy="6" r="4.700" strokeWidth="1.800" strokeDasharray="1.800 1.400" /><circle cx="6" cy="6" r="3" strokeWidth="2" /></svg>
      </button>
    </div>
  </footer>
);

const App: React.FC = () => (
  <div className="flex h-screen flex-col overflow-hidden bg-white">
    <TitleBar />
    <Toolbar />
    <main className="relative flex flex-1 flex-col">
      <Model />
      <ViewCube />
      <section className="mt-[3px] ml-[3px] flex flex-col">
        <PanelHeader title="BROWSER" collapse />
        <BrowserTree />
      </section>
      <div className="mt-auto mb-1 ml-[3px] flex items-center gap-[220px]">
        <PanelHeader title="COMMENTS" />
        <NavBar />
      </div>
    </main>
    <Timeline />
  </div>
);

export default App;
